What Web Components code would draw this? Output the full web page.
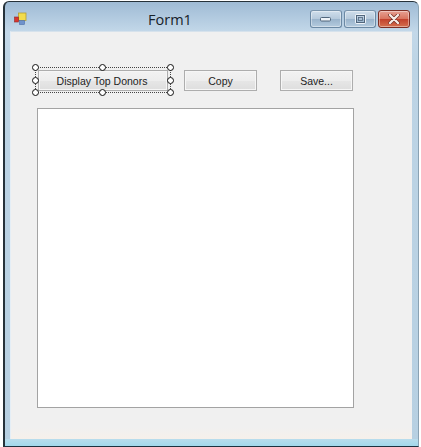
<!DOCTYPE html>
<html lang="en">
<head>
<meta charset="UTF-8">
<title>Form1</title>
<style>
  html, body { margin: 0; height: 100%; background: #fff; }
  body { font-family: "Liberation Sans", Arial, sans-serif; overflow: hidden; }
</style>
</head>
<body>
<win-form caption="Form1">
  <form-toolbar>
    <design-handles><form-button style="width:130px;padding-right:2px">Display Top Donors</form-button></design-handles>
    <form-button style="width:73px;margin-left:16px">Copy</form-button>
    <form-button style="width:73px;margin-left:23px">Save...</form-button>
  </form-toolbar>
  <form-textbox></form-textbox>
</win-form>

<template id="win-form-template">
  <style>
    :host {
      display: flex;
      flex-direction: column;
      box-sizing: border-box;
      width: 416px;
      height: 446px;
      margin: 1px 0 0 3px;
      border: 1px solid #26323a;
      border-left-width: 2px;
      border-right-color: #8aa2b3;
      border-bottom-color: #1d3140;
      border-radius: 6px 6px 0 0;
      background: linear-gradient(180deg, #9fbbd5 0, #c3d8e9 30px, #bdd4e5 60px, #b7d0e2 100%);
      overflow: hidden;
    }
    .title {
      display: flex;
      align-items: flex-start;
      height: 29px;
      flex: none;
      padding: 0 8px 0 9px;
    }
    .icon { width: 14px; height: 14px; flex: none; margin-top: 10px; }
    .caption {
      margin-left: 120px;
      margin-top: 8px;
      font: 14.5px/20px "Open Sans", "Liberation Sans", sans-serif;
      color: #17222a;
      flex: 1;
    }
    .controls { display: flex; gap: 2px; margin-top: 8px; }
    .controls button {
      display: flex;
      align-items: center;
      justify-content: center;
      padding: 0;
      height: 18px;
      width: 32px;
      box-sizing: border-box;
      border: 1px solid #6b89a4;
      border-top-color: #7a95ad;
      border-radius: 3px;
      background: linear-gradient(180deg, #cfdeeb 0, #b6cadc 48%, #9ab4cc 52%, #b4cbde 100%);
      box-shadow: inset 0 0 0 1px rgba(255,255,255,.4);
    }
    .controls button.close {
      border-color: #7c2e24;
      background: linear-gradient(180deg, #e6a092 0, #d97560 48%, #c2412c 52%, #d4704f 100%);
    }
    .client-wrap { flex: 1; display: flex; padding: 0 6px 6px 5px; min-height: 0; }
    .client {
      flex: 1;
      box-sizing: border-box;
      background: #f0f0f0;
      border-top: 1px solid #d6e2ec;
      border-left: 1px solid #e4eef6;
      padding: 38px 0 0 27px;
      background-image: linear-gradient(180deg, #f0f0f0 calc(100% - 12px), #f6f0ea 100%);
    }
    .footer { height: 7px; flex: none; margin-top: -7px; background: linear-gradient(180deg, #b9dcec, #a3d9ec); }
  </style>
  <div class="title">
    <svg class="icon" viewBox="0 0 14 14">
      <rect x="4.5" y="1" width="7.5" height="7.5" fill="#f2dc4c" stroke="#b59f2e" stroke-width=".8"/>
      <rect x="5.5" y="8.5" width="5" height="4" fill="#6f93cc" stroke="#4d6ea8" stroke-width=".6"/>
      <rect x=".5" y="5" width="4" height="5" fill="#d9362e" stroke="#8e2a2a" stroke-width=".6"/>
    </svg>
    <span class="caption"></span>
    <div class="controls">
      <button aria-label="Minimize"><svg width="12" height="6" viewBox="0 0 12 6"><rect x=".5" y="1.5" width="10" height="3.5" rx="1" fill="#eef3f8" stroke="#51677d"/></svg></button>
      <button aria-label="Maximize"><svg width="11" height="10" viewBox="0 0 11 10"><rect x="1" y="1" width="9" height="8" rx="1" fill="none" stroke="#eef3f8" stroke-width="2"/><rect x="1.5" y="1.5" width="8" height="7" fill="none" stroke="#51677d"/><rect x="3.5" y="3.5" width="4" height="3" fill="#a8bfd4" stroke="#51677d" stroke-width=".8"/></svg></button>
      <button class="close" aria-label="Close"><svg width="12" height="10" viewBox="0 0 12 10"><path d="M2 1l8 8M10 1L2 9" stroke="#6d2a20" stroke-width="3.6" stroke-linecap="round"/><path d="M2 1l8 8M10 1L2 9" stroke="#f6ece8" stroke-width="2.4" stroke-linecap="round"/></svg></button>
    </div>
  </div>
  <div class="client-wrap"><div class="client"><slot></slot></div></div>
  <div class="footer"></div>
</template>

<template id="form-toolbar-template">
  <style>
    :host { display: flex; align-items: flex-start; height: 38px; }
  </style>
  <slot></slot>
</template>

<template id="form-button-template">
  <style>
    :host {
      display: flex;
      align-items: center;
      justify-content: center;
      box-sizing: border-box;
      height: 21px;
      border: 1px solid #adadad;
      background: linear-gradient(180deg, #f2f2f2 0, #ededed 50%, #e6e6e6 52%, #dedede 100%);
      box-shadow: inset 0 0 0 1px #f6f6f6;
      font: 10.5px "Liberation Sans", Arial, sans-serif;
      color: #222;
      white-space: nowrap;
    }
  </style>
  <slot></slot>
</template>

<template id="design-handles-template">
  <style>
    :host { display: block; position: relative; }
    .frame {
      position: absolute;
      left: -3px; top: -3px; right: -3px; bottom: -2px;
      border: 1px dotted #444;
      pointer-events: none;
    }
    i {
      position: absolute;
      box-sizing: border-box;
      width: 7px; height: 7px;
      background: #fff;
      border: 1.5px solid #111;
      border-radius: 50%;
    }
  </style>
  <slot></slot>
  <div class="frame"></div>
  <i style="left:-6px;top:-6px"></i>
  <i style="left:61px;top:-6px"></i>
  <i style="right:-6px;top:-6px"></i>
  <i style="left:-6px;top:7px"></i>
  <i style="right:-6px;top:7px"></i>
  <i style="left:-6px;bottom:-5px"></i>
  <i style="left:61px;bottom:-5px"></i>
  <i style="right:-6px;bottom:-5px"></i>
</template>

<template id="form-textbox-template">
  <style>
    :host {
      display: block;
      box-sizing: border-box;
      width: 317px;
      height: 300px;
      margin-left: -1px;
      background: #fff;
      border: 1px solid #a3a3a3;
    }
  </style>
</template>

<script>
  (function () {
    // every element just stamps its template into an open shadow root
    class Base extends HTMLElement {
      constructor() {
        super()
        const template = document.querySelector(`#${this.localName}-template`)
        this.attachShadow({ mode: 'open' }).appendChild(template.content.cloneNode(true))
      }
    }
    class WinForm extends Base {
      connectedCallback() {
        this.shadowRoot.querySelector('.caption').textContent = this.getAttribute('caption')
      }
    }
    customElements.define('win-form', WinForm)
    customElements.define('form-toolbar', class extends Base {})
    customElements.define('form-button', class extends Base {})
    customElements.define('design-handles', class extends Base {})
    customElements.define('form-textbox', class extends Base {})
  })()
</script>
</body>
</html>
